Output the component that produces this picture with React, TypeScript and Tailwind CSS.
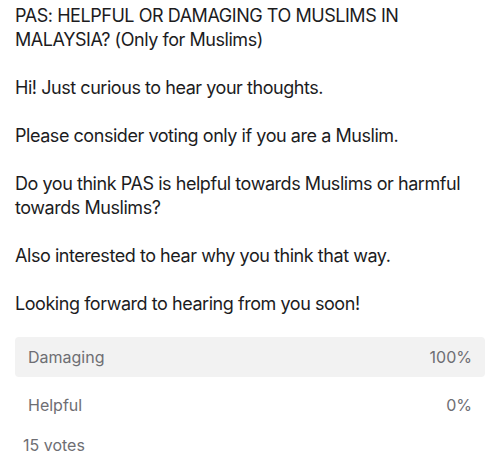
export default function App() {
  const lines = [
    'Hi! Just curious to hear your thoughts.',
    'Please consider voting only if you are a Muslim.',
    'Do you think PAS is helpful towards Muslims or harmful towards Muslims?',
    'Also interested to hear why you think that way.',
    'Looking forward to hearing from you soon!',
  ]
  return (
    <div className="w-[500px] h-[467px] bg-white font-['Inter',sans-serif] text-[#1c1c1e] px-[15px] pt-[4px]">
      <div className="text-[18px] leading-[24px] tracking-[-0.45px] space-y-[24px]">
        <p>PAS: HELPFUL OR DAMAGING TO MUSLIMS IN MALAYSIA? (Only for Muslims)</p>
        {lines.map((l) => (
          <p key={l}>{l}</p>
        ))}
      </div>
      <div className="mt-[21px] text-[16px] text-[#6e6e73]">
        <div className="flex items-center justify-between h-[40px] px-[13px] rounded-[4px] bg-[#f2f2f2]">
          <span>Damaging</span>
          <span>100%</span>
        </div>
        <div className="flex items-center justify-between h-[40px] px-[13px] mt-[8px]">
          <span>Helpful</span>
          <span>0%</span>
        </div>
        <div className="px-[8px] h-[40px] flex items-center">15 votes</div>
      </div>
    </div>
  )
}
